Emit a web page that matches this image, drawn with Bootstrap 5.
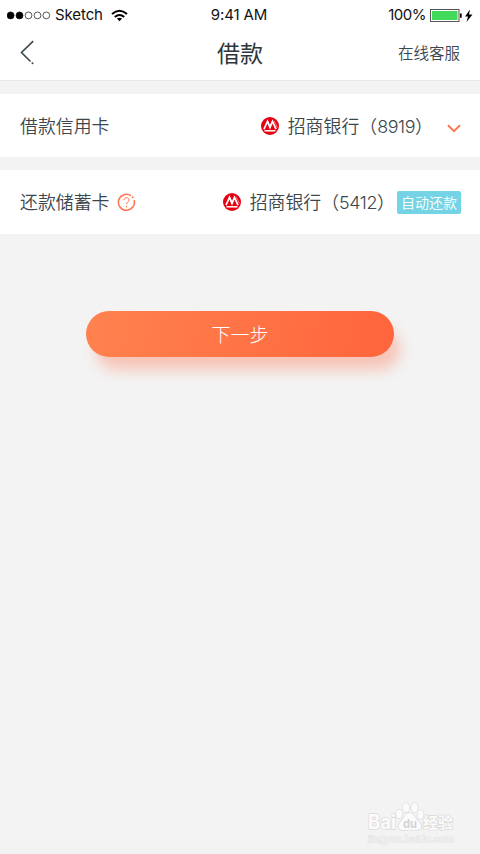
<!DOCTYPE html>
<html lang="zh-CN">
<head>
<meta charset="utf-8">
<meta name="viewport" content="width=device-width, initial-scale=1">
<title>借款</title>
<link href="https://cdn.jsdelivr.net/npm/bootstrap@5.3.0/dist/css/bootstrap.min.css" rel="stylesheet">
<style>
body{background:#f3f3f3;color:#3c464d;font-family:Inter,"Noto Sans CJK SC",sans-serif;min-height:854px;overflow:hidden}
svg{display:block;flex:none}
.top-area{height:81px;border-bottom:1px solid #e8e8e8}
.status-line{height:30px;font-size:15px;line-height:30px;color:#111;padding:0 7px;letter-spacing:-.1px}
.clock{margin-left:-2px}
.battery-level{letter-spacing:-.5px}
.side{flex:1 1 0}
.title-line{height:46px;padding:0 20px}
.page-title{font-size:23px;line-height:46px;color:#2d363c;padding-top:2px}
.service{font-size:15.5px;line-height:46px;color:#3c464d;font-weight:350}
.title-line .service{display:block;padding-top:2px}
.pay-row{height:64px;padding:0 19px 0 20px;font-size:17.9px;line-height:62px;font-weight:350;white-space:nowrap}
.pay-row .label{padding-top:2px}
.first-row{margin-top:13px;height:63px}
.second-row{margin-top:13px}
.bank-icon{margin-right:9px}
.digits{letter-spacing:-.4px}
.arrow-gap{margin-left:14px;margin-top:5px}
.auto-tag{background:#74d3e4;border-radius:2px;font-size:14px;line-height:24px;height:23px;width:64px;font-weight:350;padding:0;margin-left:2px}
.next-btn{width:308px;height:46px;margin-top:77px;border:0;color:#fff;font-size:19px;line-height:44px;padding:3px 0 0;font-weight:300;background:linear-gradient(100deg,#ff824f,#ff653c);box-shadow:8px 15px 14px -2px rgba(255,101,60,.32)}
.next-btn:hover{color:#fff}
.watermark{position:absolute;left:364px;top:800px}
</style>
<script src="https://cdn.jsdelivr.net/npm/bootstrap@5.3.0/dist/js/bootstrap.bundle.min.js"></script>
</head>
<body>
<svg width="0" height="0" class="position-absolute" aria-hidden="true"><defs>
<symbol id="bank" viewBox="0 0 18 18"><circle cx="9" cy="9" r="9" fill="#e60012"/><path d="M3 12.200 6.500 4.500 9 10.500l2.500-6L15 12.200" fill="none" stroke="#fff" stroke-width="1.700"/><path d="M7 4.500 9.600 11M11 4.500 8.400 11" stroke="#fff" stroke-width=".8"/><path d="M3.500 13.800h11" stroke="#fff" stroke-width="1.500"/><path d="M13 3.700 16.500 10.500" stroke="#fff" stroke-opacity=".7" stroke-width=".7"/></symbol>
</defs></svg>
<header class="top-area bg-white">
  <div class="status-line d-flex align-items-center">
    <div class="side d-flex align-items-center">
      <svg width="44" height="10" viewBox="0 0 44 10"><g stroke="#111" stroke-width=".7" fill="none"><circle cx="3.600" cy="5.400" r="3.500" fill="#000"/><circle cx="12.500" cy="5.400" r="3.500" fill="#000"/><circle cx="21.500" cy="5.400" r="3.400"/><circle cx="30.500" cy="5.400" r="3.400"/><circle cx="39.300" cy="5.400" r="3.400"/></g></svg>
      <span class="ms-1">Sketch</span>
      <svg class="ms-2" width="17" height="13" viewBox="0 0 17 13"><g fill="none" stroke="#000" stroke-width="2"><path d="M1 5Q8.500-1.600 16 5M3.800 8Q8.500 4 13.200 8"/></g><path d="M5.900 9.600Q8.500 7.900 11.100 9.600L8.500 12.300Z"/></svg>
    </div>
    <span class="clock">9:41 AM</span>
    <div class="side d-flex align-items-center justify-content-end">
      <span class="battery-level">100%</span>
      <svg class="ms-1" width="43" height="14" viewBox="0 0 43 14"><rect x=".5" y="1.500" width="28.500" height="12" fill="#fff" stroke="#555"/><rect x="2" y="3" width="25.500" height="9" fill="#43d95b"/><path d="M30 5.500h1.700v4.200H30zM40 1.500 35 8.500h3l-1.500 5.500 6-7.500h-3.500z"/></svg>
    </div>
  </div>
  <nav class="title-line d-flex align-items-center">
    <div class="side"><svg width="16" height="26" viewBox="0 0 16 26"><path d="M13.200 1.200 1.500 12.500l9 9" fill="none" stroke="#3c464d" stroke-width="1.600"/><circle cx="12.500" cy="23.300" r="1" fill="#3c464d"/></svg></div>
    <span class="page-title">借款</span>
    <div class="side text-end"><span class="service">在线客服</span></div>
  </nav>
</header>
<main>
  <section class="pay-row first-row bg-white d-flex align-items-center">
    <span class="label">借款信用卡</span>
    <svg class="bank-icon ms-auto" width="18" height="18"><use href="#bank"/></svg>
    <span class="label">招商银行（<span class="digits">8919</span>）</span>
    <svg class="arrow-gap" width="14" height="9" viewBox="0 0 14 9"><path d="M1 1.200 7 7.200l6-6" fill="none" stroke="#ff7651" stroke-width="2"/></svg>
  </section>
  <section class="pay-row second-row bg-white d-flex align-items-center">
    <span class="label">还款储蓄卡</span>
    <svg class="ms-2" width="19" height="19" viewBox="0 0 19 19"><path d="M14 2.700A8 8 0 1 0 17.100 7" fill="none" stroke="#ff7651" stroke-width="1.600"/><path d="M15 3.600Q15.800 4.200 16.400 5.200" fill="none" stroke="#ff7651" stroke-width="1.500"/><path d="M6.900 7.200C7 3.800 12 4 12 7c0 2-2.500 2-2.500 4.400" fill="none" stroke="#ff7651"/><circle cx="9.500" cy="13.700" r=".8" fill="#ff7651"/></svg>
    <svg class="bank-icon ms-auto" width="18" height="18"><use href="#bank"/></svg>
    <span class="label">招商银行（<span class="digits">5412</span>）</span>
    <span class="badge auto-tag">自动还款</span>
  </section>
  <div class="text-center"><button type="button" class="btn next-btn rounded-pill">下一步</button></div>
</main>
<svg class="watermark" width="96" height="48" viewBox="0 0 96 48" font-family="Inter,'Noto Sans CJK SC',sans-serif">
<g fill="#fbfbfb" stroke="#dadada" stroke-width="1.400" paint-order="stroke">
<text x="4" y="29" font-size="20" font-weight="700" textLength="28" lengthAdjust="spacingAndGlyphs">Bai</text>
<ellipse cx="35" cy="14" rx="3" ry="4.200"/><ellipse cx="42" cy="7.500" rx="3.200" ry="4.500"/><ellipse cx="50.500" cy="7.500" rx="3.200" ry="4.500"/><ellipse cx="56.500" cy="14.500" rx="3" ry="4.200"/>
<path d="M45.500 13c-5 0-5 5-9 9-4 4-2 8.500 3 8q6-.7 12 0c6 .5 7.500-4.500 3.500-8-4-3.200-4.500-9-9.500-9Z"/>
<text x="59" y="28" font-size="15" font-weight="700" textLength="30" lengthAdjust="spacingAndGlyphs">经验</text></g>
<text x="4" y="41.500" font-size="9" stroke="#dfdfdf" stroke-width="1" paint-order="stroke" fill="#f6f6f6" textLength="86" lengthAdjust="spacingAndGlyphs">jingyan.baidu.com</text>
<text x="39" y="27.500" font-size="12" font-weight="700" fill="#d4d4d4" textLength="14" lengthAdjust="spacingAndGlyphs">du</text>
</svg>
</body>
</html>
